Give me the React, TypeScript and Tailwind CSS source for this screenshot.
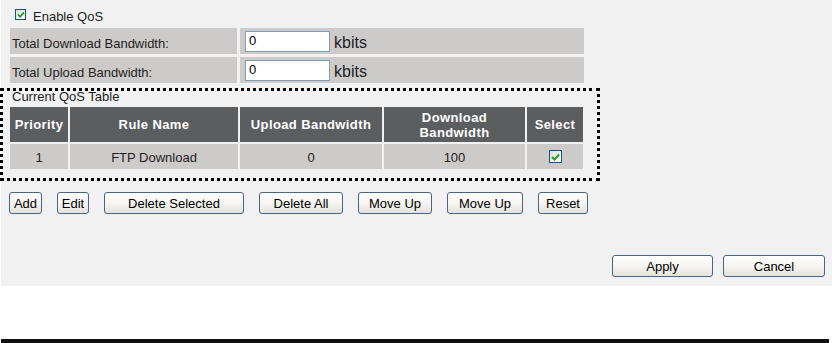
import React from 'react'

const font = "font-['Liberation_Sans',Arial,sans-serif]"

function Check({ big }: { big?: boolean }) {
  return (
    <div
      className={`${big ? 'w-[13px] h-[13px]' : 'w-[11px] h-[11px]'} shrink-0 border border-[#1c5180] bg-gradient-to-br from-[#dcdcd7] to-white flex items-center justify-center`}
    >
      <svg width={big ? 9 : 8} height={big ? 8 : 7} viewBox="0 0 9 8">
        <path d="M1 4 L3.5 6.5 L8 1.5" fill="none" stroke="#21a121" strokeWidth="2" />
      </svg>
    </div>
  )
}

function Btn({ label, width }: { label: string; width: string }) {
  return (
    <button
      className={`${width} h-[22px] shrink-0 rounded-[3px] border border-[#4a6488] bg-gradient-to-b from-white via-[#f6f5f1] to-[#e4e2d9] text-[13px] leading-none text-black`}
    >
      {label}
    </button>
  )
}

function BandwidthRow({ label }: { label: string }) {
  return (
    <div className="flex gap-[3px] h-[26px]">
      <div className="w-[227px] bg-[#cdcbc9] flex items-center pl-[2px] pt-[5px] text-[13px] text-[#1e1e1e]">
        {label}
      </div>
      <div className="w-[344px] bg-[#cdcbc9] flex items-center pl-[5px] gap-[4px]">
        <div className="w-[85px] h-[21px] border border-[#7f9db9] bg-white flex items-center pl-[3px] text-[13px] text-black">
          0
        </div>
        <span className="text-[16px] text-[#1e1e1e] pt-[3px]">kbits</span>
      </div>
    </div>
  )
}

const headCell = 'bg-[#5c5d5f] text-white font-bold text-[13px] tracking-[0.4px] text-center p-0'
const dataCell = 'bg-[#cdcbc9] text-[13px] text-[#1e1e1e] text-center p-0 pt-[2px]'

export default function App() {
  return (
    <div className={`w-[832px] h-[343px] bg-white flex flex-col ${font}`}>
      <div className="ml-px w-[831px] h-[286px] bg-[#f0f1f0] flex flex-col pt-[9px]">
        <div className="flex items-start gap-[7px] pl-[14px]">
          <Check />
          <span className="text-[13px] leading-[15px] text-[#1e1e1e]">Enable QoS</span>
        </div>

        <div className="mt-[4px] ml-[9px] flex flex-col gap-[3px]">
          <BandwidthRow label="Total Download Bandwidth:" />
          <BandwidthRow label="Total Upload Bandwidth:" />
        </div>

        {/* dotted frame round the rule table */}
        <div className="mt-[5px] -ml-px w-[600px] border-[3px] border-dotted border-black pb-[7px]">
          <div className="-mt-px pl-[9px] text-[13px] leading-[13px] text-[#1e1e1e]">Current QoS Table</div>
          <table className="mt-[2px] ml-[5px] w-[577px] table-fixed border-separate border-spacing-[2px]">
            <thead>
              <tr className="h-[35px]">
                <th className={`${headCell} w-[58px]`}>Priority</th>
                <th className={`${headCell} w-[168px]`}>Rule Name</th>
                <th className={`${headCell} w-[142px]`}>Upload Bandwidth</th>
                <th className={`${headCell} w-[141px] leading-[15px]`}>
                  Download
                  <br />
                  Bandwidth
                </th>
                <th className={`${headCell} w-[56px]`}>Select</th>
              </tr>
            </thead>
            <tbody>
              <tr className="h-[25px]">
                <td className={dataCell}>1</td>
                <td className={dataCell}>FTP Download</td>
                <td className={dataCell}>0</td>
                <td className={dataCell}>100</td>
                <td className="bg-[#cdcbc9] p-0">
                  <div className="flex justify-center">
                    <Check big />
                  </div>
                </td>
              </tr>
            </tbody>
          </table>
        </div>

        <div className="mt-[11px] pl-[8px] flex gap-[15px]">
          <Btn label="Add" width="w-[33px]" />
          <Btn label="Edit" width="w-[32px]" />
          <Btn label="Delete Selected" width="w-[140px]" />
          <Btn label="Delete All" width="w-[84px]" />
          <Btn label="Move Up" width="w-[74px]" />
          <Btn label="Move Up" width="w-[76px]" />
          <Btn label="Reset" width="w-[50px]" />
        </div>

        <div className="mt-[41px] pr-[7px] flex justify-end gap-[10px]">
          <Btn label="Apply" width="w-[101px]" />
          <Btn label="Cancel" width="w-[102px]" />
        </div>
      </div>
      <div className="flex-1" />
      <div className="ml-px w-[828px] h-[4px] bg-[#111111]" />
    </div>
  )
}
